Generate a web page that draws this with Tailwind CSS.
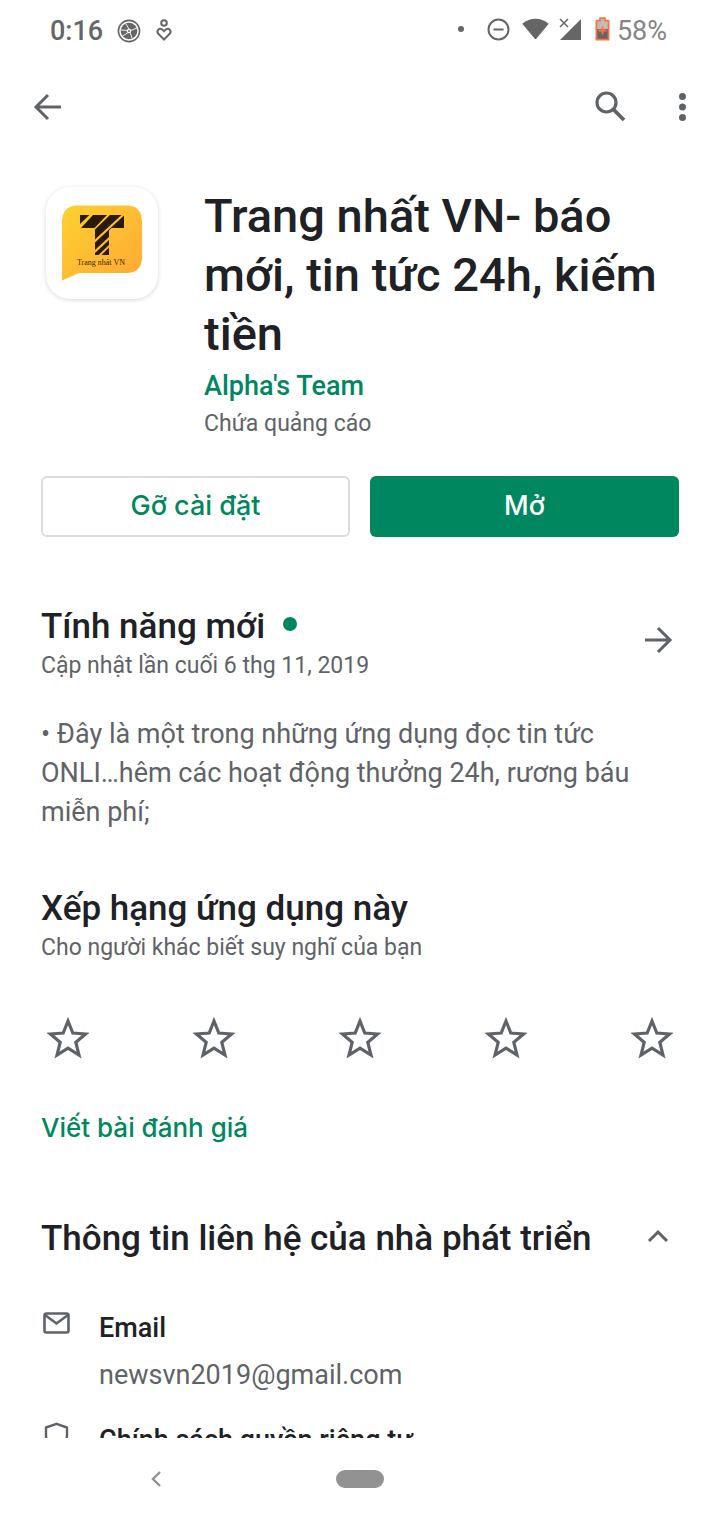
<!DOCTYPE html>
<html lang="vi">
<head>
<meta charset="utf-8">
<meta name="viewport" content="width=device-width, initial-scale=1">
<title>Trang nhất VN</title>
<script src="https://cdn.jsdelivr.net/npm/@tailwindcss/browser@4"></script>
</head>
<body class="flex h-screen flex-col bg-white font-[Roboto,sans-serif] text-[#202124]">
  <!-- Status bar -->
  <div class="flex h-[62px] shrink-0 items-center justify-between pr-[53px] pl-[50px] text-[27px] text-[#666]">
    <div class="flex items-center">
      <span class="font-medium">0:16</span>
      <svg class="ml-[14px] size-6" viewBox="0 0 24 24" fill="none"><circle cx="12" cy="12" r="10.600" stroke="#666" stroke-width="1.600"/><circle cx="12" cy="12" r="8.300" fill="#666"/><g stroke="#fff" stroke-width="0.900"><path d="M12 10 8.500 4.200M14 11.400 20 9M13.200 13.800 15 19M10.800 13.800 5.500 17M10 11.400 4 11"/></g><circle cx="12" cy="12" r="2.200" fill="#fff"/><circle cx="12" cy="12" r="1" fill="#666"/></svg>
      <svg class="ml-[14px] h-6 w-[18px]" viewBox="0 0 18 24" fill="none" stroke="#666" stroke-width="2"><circle cx="9" cy="4" r="2.800"/><path d="M9 20.500 3.300 14.800C1 12 4 8.500 7 10.300L9 12.200 11 10.300C14 8.500 17 12 14.700 14.800Z"/></svg>
    </div>
    <div class="flex items-center">
      <span class="mb-1 size-[6px] rounded-full bg-[#666]"></span>
      <svg class="mb-1 ml-[23px] size-[23px]" viewBox="0 0 23 23" fill="none" stroke="#666" stroke-width="2"><circle cx="11.500" cy="11.500" r="10"/><path d="M6.500 11.500h10"/></svg>
      <svg class="mb-1 ml-3 h-[22px] w-[27px]" viewBox="0 0 27 22" fill="#666"><path d="M.3 5.800C8-1 19-1 26.700 5.800L14.500 20.500Q13.500 21.600 12.500 20.500Z"/></svg>
      <svg class="mb-1 ml-[10px] h-6 w-[22px]" viewBox="0 0 22 24"><path d="M22 2v21H1Z" fill="#666"/><path d="M0 0h9L11 10H0Z" fill="#fff"/><path d="m1 2 8 8M9 2l-8 8" stroke="#666" stroke-width="1.500"/></svg>
      <svg class="mb-1 ml-[14px] h-6 w-[15px]" viewBox="0 0 15 24"><path d="M5 1.200h5v2.500h3.600v19H1.400v-19H5Z" fill="#bdbdbd"/><path d="M2 12h11v10H2Z" fill="#666"/><path d="M5 1.200h5v2.500h3.600v19H1.400v-19H5Z" fill="none" stroke="#ff7043" stroke-width="1.800" stroke-linejoin="round"/><path d="M7.500 9.500v8M3.500 13.500h8" stroke="#ff7043" stroke-width="1.800"/></svg>
      <span class="ml-[7px] text-[#858585]">58%</span>
    </div>
  </div>

  <!-- Toolbar -->
  <header class="flex h-[90px] shrink-0 items-center justify-between pr-5 pl-[33px] text-[#5f6368]">
    <button aria-label="Quay lại"><svg class="size-[30px]" viewBox="0 0 30 30" fill="none" stroke="currentColor" stroke-width="3"><path d="M28 15H3M15 3 3 15 15 27"/></svg></button>
    <div class="flex items-center">
      <button aria-label="Tìm kiếm"><svg class="size-[32px]" viewBox="0 0 32 32" fill="none" stroke="currentColor"><circle cx="12.500" cy="11.500" r="9.500" stroke-width="3.200"/><path d="m19.500 18.500 10.500 10.500" stroke-width="3.800"/></svg></button>
      <button aria-label="Thêm tùy chọn" class="ml-[40px]"><svg class="h-[30px] w-[34px]" viewBox="0 0 34 30" fill="currentColor"><circle cx="16.500" cy="4.500" r="3.500"/><circle cx="16.500" cy="15" r="3.500"/><circle cx="16.500" cy="25.500" r="3.500"/></svg></button>
    </div>
  </header>

  <main class="min-h-0 flex-1 overflow-hidden px-[41px]">
    <section class="flex items-start pt-[34px]">
      <div class="mt-px ml-[5px] size-[112px] shrink-0 rounded-[24px] bg-white shadow-[0_1px_4px_rgba(0,0,0,0.16)]">
        <svg class="size-full" viewBox="0 0 112 112" role="img" aria-label="Trang nhất VN">
          <defs><linearGradient id="gold" x1="0" y1="0" x2="1" y2="1"><stop offset="0" stop-color="#ffd131"/><stop offset="1" stop-color="#ffa834"/></linearGradient></defs>
          <path d="M32 18.500H80Q96 18.500 96 35V70Q96 86 80 86H33L16 93.500V35Q16 18.500 32 18.500Z" fill="url(#gold)"/>
          <g fill="#2b1b05"><path d="M34 28H43.500L34 37Z"/><path d="M47 28H61L48.500 41H35Z"/><path d="M64 28H75.500L49 52.500V42.500Z"/><path d="M78 28.500V41H65.500L63 43.500V50L49 63V55.500Z"/><path d="M63 53V58L52.500 68H49V66Z"/><path d="M63 60.500V68H55.500Z"/></g>
          <text x="31" y="78" font-family="Liberation Serif, serif" font-size="8" fill="#3a2605">Trang nhất VN</text>
        </svg>
      </div>
      <div class="ml-[46px] flex-1">
        <h1 class="text-[47px] leading-[59px] font-medium">Trang nhất VN- báo mới, tin tức 24h, kiếm tiền</h1>
        <a href="#" class="block pt-[5px] text-[27px] leading-9 font-medium text-[#01875f]">Alpha's Team</a>
        <p class="text-[23px] leading-[40px] text-[#5f6368]">Chứa quảng cáo</p>
      </div>
    </section>

    <div class="mt-8 grid grid-cols-2 gap-5 font-[Inter,sans-serif] text-[27px] font-medium">
      <button class="h-[61px] rounded-md border-2 border-[#dadce0] text-[#01875f]">Gỡ cài đặt</button>
      <button class="h-[61px] rounded-md bg-[#01875f] text-white">Mở</button>
    </div>

    <section class="mt-[68px]">
      <div class="flex items-center justify-between">
        <div>
          <h2 class="flex items-center text-[35px] leading-[44px] font-medium">Tính năng mới<span class="mb-[6px] ml-[18px] size-[14px] rounded-full bg-[#01875f]"></span></h2>
          <p class="text-[23px] leading-[34px] text-[#5f6368]">Cập nhật lần cuối 6 thg 11, 2019</p>
        </div>
        <button aria-label="Xem tính năng mới" class="mr-[6px] mb-2 text-[#5f6368]"><svg class="size-[30px]" viewBox="0 0 30 30" fill="none" stroke="currentColor" stroke-width="3"><path d="M2 15H27M15 3 27 15 15 27"/></svg></button>
      </div>
      <p class="mt-8 pr-10 text-[27px] leading-[39px] text-[#5f6368]">• Đây là một trong những ứng dụng đọc tin tức ONLI…hêm các hoạt động thưởng 24h, rương báu miễn phí;</p>
    </section>

    <section class="mt-[55px]">
      <h2 class="text-[35px] leading-[44px] font-medium">Xếp hạng ứng dụng này</h2>
      <p class="text-[23px] leading-[34px] text-[#5f6368]">Cho người khác biết suy nghĩ của bạn</p>
      <div class="mt-[51px] flex justify-between px-[5px] text-[#5f6368]">
        <button aria-label="1 sao"><svg class="size-11" viewBox="0 0 44 44" fill="none" stroke="currentColor" stroke-width="3.200"><path d="m22 5 4.800 12 12.800 1-9.800 8.300 3.200 12.700L22 32.200 11 39l3.200-12.700L4.400 18l12.800-1Z"/></svg></button>
        <button aria-label="2 sao"><svg class="size-11" viewBox="0 0 44 44" fill="none" stroke="currentColor" stroke-width="3.200"><path d="m22 5 4.800 12 12.800 1-9.800 8.300 3.200 12.700L22 32.200 11 39l3.200-12.700L4.400 18l12.800-1Z"/></svg></button>
        <button aria-label="3 sao"><svg class="size-11" viewBox="0 0 44 44" fill="none" stroke="currentColor" stroke-width="3.200"><path d="m22 5 4.800 12 12.800 1-9.800 8.300 3.200 12.700L22 32.200 11 39l3.200-12.700L4.400 18l12.800-1Z"/></svg></button>
        <button aria-label="4 sao"><svg class="size-11" viewBox="0 0 44 44" fill="none" stroke="currentColor" stroke-width="3.200"><path d="m22 5 4.800 12 12.800 1-9.800 8.300 3.200 12.700L22 32.200 11 39l3.200-12.700L4.400 18l12.800-1Z"/></svg></button>
        <button aria-label="5 sao"><svg class="size-11" viewBox="0 0 44 44" fill="none" stroke="currentColor" stroke-width="3.200"><path d="m22 5 4.800 12 12.800 1-9.800 8.300 3.200 12.700L22 32.200 11 39l3.200-12.700L4.400 18l12.800-1Z"/></svg></button>
      </div>
      <a href="#" class="mt-[50px] inline-block font-[Inter,sans-serif] text-[26px] leading-[36px] font-medium text-[#01875f]">Viết bài đánh giá</a>
    </section>

    <section class="mt-[71px]">
      <button class="flex w-full items-center justify-between" aria-expanded="true">
        <span class="text-[35px] leading-[44px] font-medium">Thông tin liên hệ của nhà phát triển</span>
        <svg class="mr-[10px] mb-[6px] h-[14px] w-[22px]" viewBox="0 0 22 14" fill="none" stroke="#5f6368" stroke-width="3"><path d="m2 12 9-9 9 9"/></svg>
      </button>
      <div class="mt-[49px] flex items-start">
        <svg class="mt-[2px] ml-[2px] h-[22px] w-[27px] shrink-0" viewBox="0 0 27 22" fill="none" stroke="#5f6368" stroke-width="2.600"><rect x="1.500" y="1.500" width="24" height="19" rx="2"/><path d="m2 3 11.500 8.500L25 3"/></svg>
        <div class="ml-[29px]">
          <h3 class="text-[27px] leading-[36px] font-medium">Email</h3>
          <a href="mailto:newsvn2019@gmail.com" class="mt-[11px] block text-[27px] leading-[36px] text-[#5f6368]">newsvn2019@gmail.com</a>
        </div>
      </div>
      <div class="mt-[29px] flex items-start">
        <svg class="ml-[2px] h-[30px] w-[27px] shrink-0" viewBox="0 0 27 30" fill="none" stroke="#5f6368" stroke-width="2.400"><path d="M3 5.500 13.500 1.800 24 5.500V13c0 7-4 12-10.500 15C7 25 3 20 3 13Z" stroke-linejoin="round"/></svg>
        <h3 class="ml-[29px] text-[27px] leading-[36px] font-medium">Chính sách quyền riêng tư</h3>
      </div>
    </section>
  </main>

  <!-- System navigation -->
  <nav class="grid h-[82px] shrink-0 grid-cols-[1fr_auto_1fr] items-center bg-white">
    <button aria-label="Trở lại" class="mr-[10px] justify-self-center"><svg class="h-[18px] w-[48px]" viewBox="0 0 48 18" fill="none" stroke="#929292" stroke-width="2.400"><path d="m21 2-7 7 7 7"/></svg></button>
    <button aria-label="Màn hình chính" class="h-[18px] w-12 rounded-full bg-[#929292]"></button>
  </nav>
</body>
</html>
